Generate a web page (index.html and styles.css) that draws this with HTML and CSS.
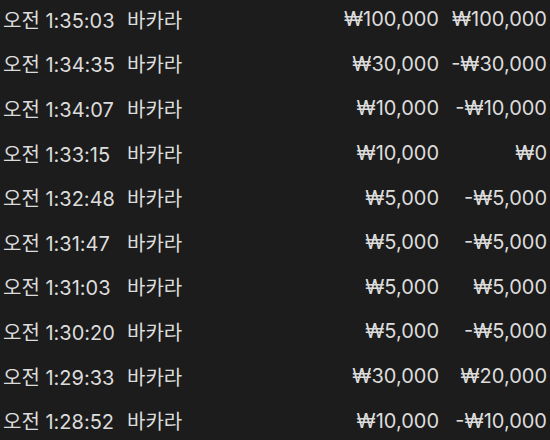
FILE: index.html
```html
<!DOCTYPE html>
<html lang="ko">
<head>
<meta charset="utf-8">
<link rel="stylesheet" href="styles.css">
</head>
<body>
<div class="list">
  <div class="row"><span class="time">오전 1:35:03</span><span class="game">바카라</span><span class="bet">₩100,000</span><span class="result">₩100,000</span></div>
  <div class="row"><span class="time">오전 1:34:35</span><span class="game">바카라</span><span class="bet">₩30,000</span><span class="result">-₩30,000</span></div>
  <div class="row"><span class="time">오전 1:34:07</span><span class="game">바카라</span><span class="bet">₩10,000</span><span class="result">-₩10,000</span></div>
  <div class="row"><span class="time">오전 1:33:15</span><span class="game">바카라</span><span class="bet">₩10,000</span><span class="result">₩0</span></div>
  <div class="row"><span class="time">오전 1:32:48</span><span class="game">바카라</span><span class="bet">₩5,000</span><span class="result">-₩5,000</span></div>
  <div class="row"><span class="time">오전 1:31:47</span><span class="game">바카라</span><span class="bet">₩5,000</span><span class="result">-₩5,000</span></div>
  <div class="row"><span class="time">오전 1:31:03</span><span class="game">바카라</span><span class="bet">₩5,000</span><span class="result">₩5,000</span></div>
  <div class="row"><span class="time">오전 1:30:20</span><span class="game">바카라</span><span class="bet">₩5,000</span><span class="result">-₩5,000</span></div>
  <div class="row"><span class="time">오전 1:29:33</span><span class="game">바카라</span><span class="bet">₩30,000</span><span class="result">₩20,000</span></div>
  <div class="row"><span class="time">오전 1:28:52</span><span class="game">바카라</span><span class="bet">₩10,000</span><span class="result">-₩10,000</span></div>
</div>
</body>
</html>
```
FILE: styles.css
```css
html, body {
  margin: 0;
  padding: 0;
  background: #1c1c1c;
  overflow: hidden;
}
body {
  width: 550px;
  height: 440px;
  font-family: Inter, "Noto Sans CJK KR", sans-serif;
  font-size: 20px;
  color: #dcdcdc;
}
.list {
  margin-top: -3px;
  padding: 0 3px;
}
.row {
  display: grid;
  grid-template-columns: 124px 1fr 130px 108px;
  height: 44.6px;
  align-items: center;
  white-space: nowrap;
}
.bet, .result {
  text-align: right;
}
```
